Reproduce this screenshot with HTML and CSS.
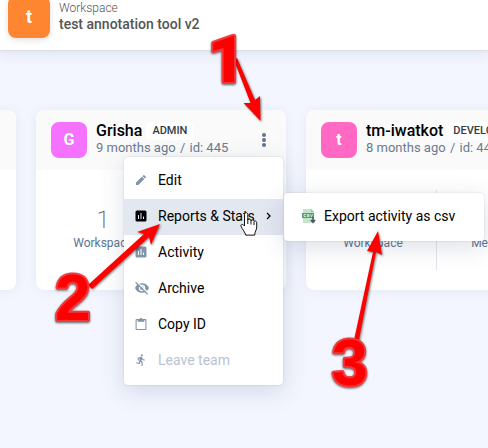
FILE: index.html
```
<!DOCTYPE html>
<html lang="en">
<head>
<meta charset="utf-8">
<meta name="viewport" content="width=device-width, initial-scale=1">
<title>Teams</title>
<link rel="stylesheet" href="styles.css">
</head>
<body>
<header class="topbar">
  <div class="avatar avatar-large orange">t</div>
  <div class="topbar-text">
    <div class="topbar-label">Workspace</div>
    <div class="topbar-title">test annotation tool v2</div>
  </div>
</header>
<main class="teams">
  <article class="card"><div class="card-head"></div></article>
  <article class="card">
    <div class="card-head">
      <div class="avatar pink-violet">G</div>
      <div class="card-info">
        <div class="card-name">Grisha <span class="role">ADMIN</span></div>
        <div class="card-meta">9 months ago <span>/</span> id: 445</div>
      </div>
      <button class="more" aria-label="Team actions"><svg viewBox="0 0 4 14" width="4" height="14"><circle cx="2" cy="2" r="2"/><circle cx="2" cy="7" r="2"/><circle cx="2" cy="12" r="2"/></svg></button>
    </div>
    <div class="stats">
      <div class="stat"><div class="stat-value">1</div><div class="stat-label">Workspace</div></div>
      <div class="stat"></div>
    </div>
    <nav class="menu menu-main">
      <button class="item"><svg class="icon" viewBox="0 0 24 24"><path d="M2 17.200V22h4.800L18.500 10.200l-4.700-4.700zM21.600 7.200c.5-.5.5-1.300 0-1.800l-3-3c-.5-.5-1.300-.5-1.800 0L14.900 4.300l4.800 4.800z"/></svg>Edit</button>
      <button class="item active"><svg class="icon" viewBox="0 0 24 24"><path fill-rule="evenodd" d="M4 1h16a3 3 0 0 1 3 3v16a3 3 0 0 1-3 3H4a3 3 0 0 1-3-3V4a3 3 0 0 1 3-3zm2 9v8h2v-8zm5-4v12h2V6zm5 7v5h2v-5z"/></svg>Reports &amp; Stats<svg class="chevron" viewBox="0 0 6 8"><path d="M1 1l3 3-3 3"/></svg></button>
      <button class="item"><svg class="icon" viewBox="0 0 24 24"><path fill-rule="evenodd" d="M4 1h16a3 3 0 0 1 3 3v16a3 3 0 0 1-3 3H4a3 3 0 0 1-3-3V4a3 3 0 0 1 3-3zm2 9v8h2v-8zm5-4v12h2V6zm5 7v5h2v-5z"/></svg>Activity</button>
      <button class="item"><svg class="icon icon-wide" viewBox="1 1 22 22"><path d="M12 4.500C7 4.500 2.700 7.600 1 12c1.700 4.400 6 7.500 11 7.500s9.300-3.100 11-7.500c-1.700-4.400-6-7.500-11-7.500zm0 12.500a5 5 0 1 1 0-10 5 5 0 0 1 0 10zm0-8a3 3 0 1 0 0 6 3 3 0 0 0 0-6z"/><path d="M4 2l19 19" class="slash-gap"/><path d="M2 3l19 19" class="slash"/></svg>Archive</button>
      <button class="item"><svg class="icon" viewBox="1 1 22 22"><path d="M20 3h-5.200C14.400 1.800 13.300 1 12 1s-2.400.8-2.800 2H4c-1.100 0-2 .9-2 2v16c0 1.100.9 2 2 2h16c1.100 0 2-.9 2-2V5c0-1.100-.9-2-2-2zm0 18H4V5h2v3h12V5h2z"/></svg>Copy ID</button>
      <button class="item" disabled><svg class="icon" viewBox="1 1 22 22"><path d="M13.500 5.500a2 2 0 1 0 0-4 2 2 0 0 0 0 4zM9.900 19.400l1-4.400 2.100 2v6h2v-7.500l-2.100-2 .6-3c1.300 1.500 3.300 2.500 5.500 2.500v-2c-1.900 0-3.500-1-4.300-2.400l-1-1.600C13.300 6.400 12.700 6 12 6c-.3 0-.5.1-.8.1L6 8.300V13h2V9.600l1.800-.7L8.200 17l-4.900-1-.4 2z"/></svg>Leave team</button>
      <div class="menu menu-sub">
        <button class="item"><svg class="csv" viewBox="0 0 14 16"><path fill="#c2e6ca" d="M1 1h8l3 3v11H1z"/><path fill="#8dc69c" d="M9 1v3h3z"/><path fill="#5b9a6d" d="M0 5h12v5H0z"/><path fill="none" stroke="#dff5e3" stroke-width=".8" d="M4 6.500H2v2h2M7.300 6.500h-2v1h1.800v1H5M8.500 6.300l1 2.400 1-2.400"/><path fill="none" stroke="#435466" stroke-width="1.500" d="M11 9v5M8.800 12l2.200 2.300 2.200-2.300"/></svg>Export activity as csv</button>
      </div>
    </nav>
  </article>
  <article class="card">
    <div class="card-head">
      <div class="avatar pink">t</div>
      <div class="card-info">
        <div class="card-name">tm-iwatkot <span class="role">DEVELOPER</span></div>
        <div class="card-meta">8 months ago <span>/</span> id: 440</div>
      </div>
    </div>
    <div class="stats">
      <div class="stat"><div class="stat-label">Workspace</div></div>
      <div class="stat"><div class="stat-label">Members</div></div>
    </div>
  </article>
</main>
<svg class="notes" viewBox="0 0 488 448" width="488" height="448">
  <path class="cursor" d="M244.500 226v-11.500c0-2.500 3.300-2.500 3.300 0v5.500c.5-1.300 3-1 3.200.5.600-1 2.800-.6 3 .8.800-.8 2.700-.2 2.700 1.300v4.500c0 3-2 4.500-2 8h-9c-.4-2.600-3.300-5.700-4.700-8.900-.6-1.800 1.700-2.600 3.500-.2z"/>
  <path class="cursor-line" d="M247.800 219v5M251 220v4.500M254 221.500v3.500"/>
  <g class="arrows">
    <path d="M234 60l3-2 18 42 5-4 .5 25-17-18 7 0z"/>
    <path d="M88 285l4 4 57-52 2 8 9-21-23 8 7 2z"/>
    <path d="M354 340h5l17-88 6 3-4-24-11 20 6 1z"/>
  </g>
  <g class="digits">
    <text class="digit-one" x="208" y="82">1</text>
    <text x="55" y="320">2</text>
    <text x="332" y="385">3</text>
  </g>
</svg>
</body>
</html>
```
FILE: styles.css
```
* { box-sizing: border-box; }
body {
  margin: 0;
  min-height: 100vh;
  overflow: hidden;
  background: #f3f6fe;
  color: #000;
  font-family: Roboto, "Liberation Sans", sans-serif;
}
button { border: 0; background: none; font: inherit; padding: 0; }
.topbar {
  display: flex;
  align-items: flex-end;
  gap: 9px;
  height: 50px;
  padding: 0 8px 12px;
  background: #fff;
  box-shadow: 0 1px 1px #dcdfe6, 0 2px 16px rgba(60, 80, 120, .14);
}
.avatar {
  display: flex;
  flex: none;
  align-items: center;
  justify-content: center;
  width: 36px;
  height: 36px;
  padding-bottom: 2px;
  border-radius: 8px;
  color: #fff;
  font-size: 16px;
  font-weight: 700;
}
.avatar-large { width: 42px; height: 42px; font-size: 18px; box-shadow: 0 2px 6px rgba(0, 0, 0, .12); }
.orange { background: #ff8630; }
.pink-violet { background: #f472ff; }
.pink { background: #ff69c3; }
.topbar-text { padding-bottom: 5px; }
.topbar-label { font-size: 12px; line-height: 14px; font-weight: 300; color: #555; }
.topbar-title { font-size: 14px; line-height: 18px; font-weight: 500; color: #555; }
.teams {
  display: flex;
  gap: 20px;
  padding-top: 60px;
  margin-left: -234px;
}
.card {
  position: relative;
  flex: none;
  width: 250px;
  height: 180px;
  border-radius: 8px;
  background: #fff;
  box-shadow: 0 1px 12px rgba(60, 80, 120, .08);
}
.card-head {
  display: flex;
  align-items: flex-start;
  gap: 9px;
  height: 60px;
  padding: 12px 14px 12px 15px;
  overflow: hidden;
  border-radius: 8px 8px 0 0;
  background: #fafafa;
}
.card-info { flex: 1; white-space: nowrap; }
.card-name { display: flex; align-items: center; gap: 4px; height: 17px; font-size: 16px; font-weight: 500; }
.role { padding: 0 6px; border-radius: 4px; background: #fff; color: #333b46; font-size: 11px; line-height: 18px; font-weight: 500; }
.card-meta { font-size: 13px; line-height: 18px; color: #6b7a90; }
.card-meta span { margin: 0 1px; }
.more { display: flex; width: 16px; height: 36px; align-items: center; justify-content: center; fill: #60748d; }
.stats { display: grid; grid-template-columns: 130px 1fr; padding: 20px 0; }
.stat {
  display: flex;
  flex-direction: column;
  justify-content: flex-end;
  height: 80px;
  padding: 0 0 18px 4px;
  text-align: center;
}
.stat + .stat { padding-left: 0; border-left: 1px solid #e3e6eb; }
.stat-value { font-size: 24px; line-height: 28px; font-weight: 200; color: #665850; }
.stat-label { font-size: 12px; line-height: 18px; color: #60748d; }
.menu {
  position: absolute;
  z-index: 2;
  padding: 6px 0;
  border-radius: 4px;
  background: #fff;
  box-shadow: 0 0 2px rgba(0, 0, 0, .16), 0 6px 24px rgba(60, 80, 120, .18);
}
.menu-main { top: 47px; left: 88px; width: 159px; }
.menu-sub { top: 36px; left: 160px; width: 200px; }
.item {
  display: flex;
  align-items: center;
  width: 100%;
  height: 36px;
  padding: 0 11px 2px;
  color: #000;
  font-size: 14px;
  white-space: nowrap;
}
.icon { width: 12px; height: 12px; margin-right: 11px; fill: #8195aa; overflow: visible; }
.icon-wide { width: 14px; height: 14px; margin-right: 9px; }
.active { background: #e3e7f0; }
.active .icon { fill: #000; }
.item:disabled { color: #b9c3d3; }
.slash { stroke: #8195aa; stroke-width: 2; }
.slash-gap { stroke: #fff; stroke-width: 2; }
.chevron { width: 6px; height: 8px; margin-left: 11px; fill: none; stroke: #000; stroke-width: 1.3; }
.menu-sub .item { padding-left: 18px; }
.csv { width: 14px; height: 16px; margin-right: 8px; }
.notes { position: absolute; top: 0; left: 0; z-index: 3; pointer-events: none; }
.cursor { fill: #fff; stroke: #111; }
.cursor-line { fill: none; stroke: #111; }
.arrows { fill: #f00; filter: drop-shadow(1px 1px 1px rgba(0, 0, 0, .5)); }
.digits {
  fill: #f00;
  stroke: #f3383c;
  stroke-width: 4px;
  stroke-linejoin: round;
  paint-order: stroke;
  font-family: "Liberation Sans", sans-serif;
  font-size: 64px;
  font-weight: 700;
  filter: drop-shadow(0 1px 1px rgba(0, 0, 0, .6));
}
.digit-one { font-family: Roboto, sans-serif; font-weight: 900; }
```
